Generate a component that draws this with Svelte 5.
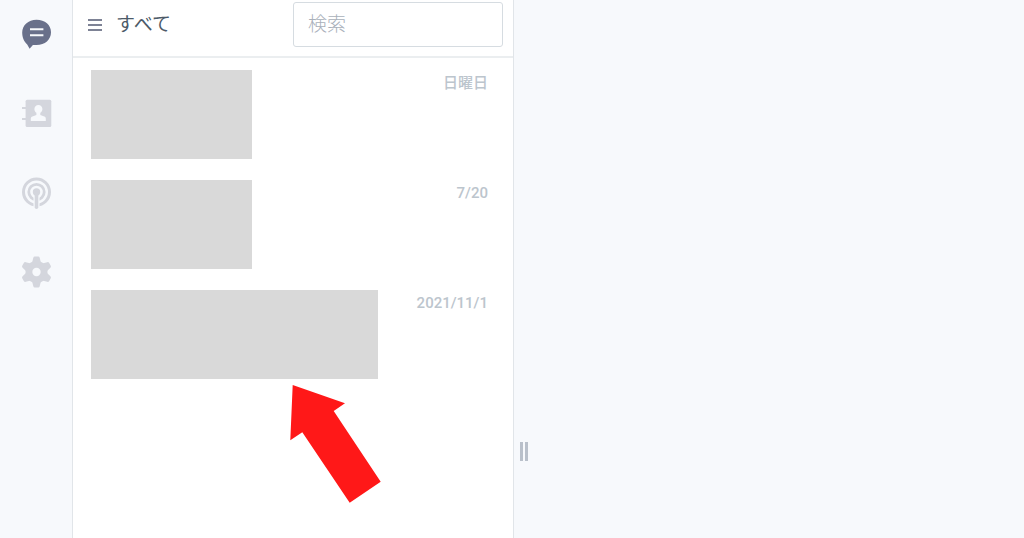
<script lang="ts">
	type Chat = { id: number; date: string; size: 'short' | 'long' };

	const chats: Chat[] = [
		{ id: 1, date: '日曜日', size: 'short' },
		{ id: 2, date: '7/20', size: 'short' },
		{ id: 3, date: '2021/11/1', size: 'long' }
	];

	const teeth = [0, 60, 120, 180, 240, 300];

	let query = $state('');
	let active = $state('chat');
</script>

<div class="app">
	<nav class="sidebar">
		<button class:active={active === 'chat'} aria-label="チャット" onclick={() => (active = 'chat')}>
			<svg viewBox="0 0 32 32">
				<path fill="currentColor" d="M16.5 1.7C25 1.7 31 6.8 31 14.2S25 27 16.5 27h-3.6L9.6 30.8 7.2 26.4C4 24 2.2 19.4 2.2 14.6 2.2 7.2 8.2 1.7 16.5 1.7z" />
				<path class="cut" stroke-width="2" d="M10 11.3h13.4M10 17.3h13.4" />
			</svg>
		</button>
		<button class:active={active === 'contacts'} aria-label="連絡先" onclick={() => (active = 'contacts')}>
			<svg viewBox="0 0 32 32">
				<rect x="5.6" y="2.7" width="25.7" height="27.3" rx="1.5" fill="currentColor" />
				<path stroke="currentColor" stroke-width="2.2" d="M2 11h5M2 22h5" />
				<path class="hole" d="M18.4 8c2.4 0 4 1.7 4 4 0 1.700-.9 3.100-2.100 3.800V18l4 1.500c1 .4 1.500 1.200 1.500 2.200V24H10.800v-2.300c0-1 .6-1.800 1.600-2.200l4-1.500v-2.200c-1.200-.7-2-2.100-2-3.800 0-2.300 1.600-4 4-4z" />
			</svg>
		</button>
		<button class:active={active === 'broadcast'} aria-label="配信" onclick={() => (active = 'broadcast')}>
			<svg viewBox="0 0 32 32">
				<circle cx="16.5" cy="16" r="13" fill="none" stroke="currentColor" stroke-width="3" />
				<circle cx="16.5" cy="16" r="7.7" fill="none" stroke="currentColor" stroke-width="2.8" />
				<path class="cut" stroke-width="6" d="M16.5 18v13" />
				<circle cx="16.5" cy="16" r="3.7" fill="currentColor" />
				<path stroke="currentColor" stroke-width="3.6" stroke-linecap="round" d="M16.5 17v14.3" />
			</svg>
		</button>
		<button class:active={active === 'settings'} aria-label="設定" onclick={() => (active = 'settings')}>
			<svg viewBox="0 0 32 32">
				<circle cx="16.5" cy="17" r="11" fill="currentColor" />
				{#each teeth as angle}
					<path
						fill="currentColor"
						transform="rotate({angle} 16.5 17)"
						d="M12 8l1.3-5.2q.3-1.3 1.5-1.3h3.4q1.2 0 1.5 1.3L21 8z"
					/>
				{/each}
				<circle class="hole" cx="16.5" cy="17" r="4.2" />
			</svg>
		</button>
	</nav>

	<section class="panel">
		<header>
			<button class="filter">
				<svg viewBox="0 0 14 14" aria-hidden="true">
					<path stroke="currentColor" stroke-width="2" d="M0 2h14M0 7h14M0 12h14" />
				</svg>
				すべて
			</button>
			<input type="text" placeholder="検索" aria-label="検索" bind:value={query} />
		</header>

		<ul>
			{#each chats as chat (chat.id)}
				<li>
					<div class="mask {chat.size}"></div>
					<time>{chat.date}</time>
					{#if chat.size === 'long'}
						<svg class="arrow" viewBox="0 0 91 118" aria-hidden="true">
							<path d="M2.7 0L55 18.3 43.7 26 90.7 96.7 59.7 117.7 12.3 47.3.3 55.3z" />
						</svg>
					{/if}
				</li>
			{/each}
		</ul>
	</section>

	<main>
		<button class="handle" aria-label="幅を変更"></button>
	</main>
</div>

<style>
	:global(body) {
		margin: 0;
		background: #f7f9fc;
	}

	.app {
		display: grid;
		grid-template-columns: 72px minmax(320px, 442px) 1fr;
		min-height: 100vh;
		font-family: Roboto, "Noto Sans CJK JP", sans-serif;
	}

	button {
		padding: 0;
		border: 0;
		background: none;
		font: inherit;
		cursor: pointer;
	}

	.sidebar {
		display: flex;
		flex-direction: column;
		align-items: center;
		gap: 47px;
		padding-top: 18px;
	}

	.sidebar button {
		width: 32px;
		height: 32px;
		color: #d4d6dd;
	}

	.sidebar button.active { color: #69708a; }

	.sidebar svg {
		display: block;
		overflow: visible;
	}

	.cut { stroke: #f7f9fc; }
	.hole { fill: #f7f9fc; }

	.panel {
		box-sizing: border-box;
		border: solid #e1e5e9;
		border-width: 0 1px;
		background: #fff;
	}

	header {
		display: flex;
		align-items: center;
		justify-content: space-between;
		padding: 2px 10px 9px 15px;
		border-bottom: 2px solid #ebeef0;
	}

	.filter {
		display: flex;
		align-items: center;
		gap: 14px;
		color: #4c5a68;
		font-size: 19px;
		line-height: 24px;
	}

	.filter svg {
		width: 14px;
		height: 14px;
		color: #7d8295;
	}

	input {
		box-sizing: border-box;
		width: 210px;
		height: 45px;
		padding: 0 14px;
		border: 1px solid #d6dce1;
		border-radius: 3px;
		font: 300 19px Roboto, "Noto Sans CJK JP", sans-serif;
		color: #4c5a68;
		outline: none;
	}

	input::placeholder { color: #a9b0ba; }

	ul {
		display: flex;
		flex-direction: column;
		gap: 21px;
		margin: 0;
		padding: 12px 25px 12px 18px;
		list-style: none;
	}

	li {
		position: relative;
		display: flex;
		justify-content: space-between;
	}

	.mask {
		height: 89px;
		background: #d9d9d9;
	}

	.short { width: 161px; }
	.long { width: 287px; }

	time {
		padding-top: 3px;
		font-size: 15px;
		font-weight: 500;
		line-height: 20px;
		color: #bcc5cd;
	}

	.arrow {
		position: absolute;
		top: 95px;
		left: 199px;
		width: 91px;
		height: 118px;
		fill: #ff1818;
	}

	main { position: relative; }

	.handle {
		position: absolute;
		top: 442px;
		left: 6px;
		box-sizing: border-box;
		width: 8px;
		height: 19px;
		border: solid #b9c0ca;
		border-width: 0 3px;
		cursor: col-resize;
	}
</style>
